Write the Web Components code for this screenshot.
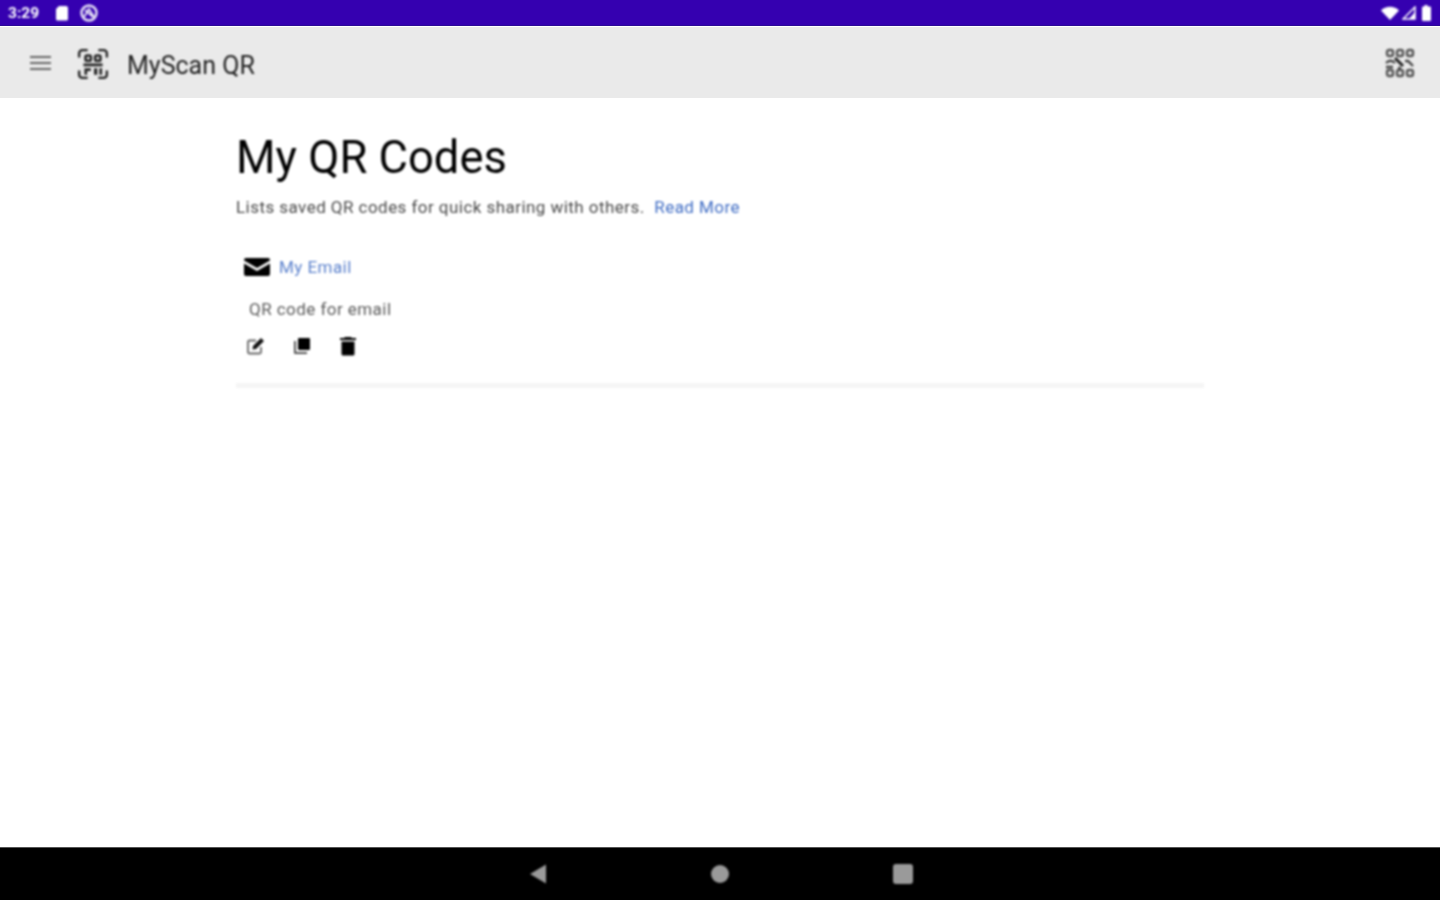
<!DOCTYPE html>
<html>
<head>
<meta charset="utf-8">
<title>MyScan QR</title>
<style>
  html, body { margin: 0; height: 100%; background: #fff; }
  body { font-family: Roboto, "Liberation Sans", sans-serif; }
</style>
</head>
<body>
<app-shell>
  <status-bar slot="status"></status-bar>
  <app-toolbar slot="toolbar" title="MyScan QR"></app-toolbar>
  <page-header title="My QR Codes" text="Lists saved QR codes for quick sharing with others." link="Read More"></page-header>
  <qr-item name="My Email" text="QR code for email"></qr-item>
  <nav-bar slot="nav"></nav-bar>
</app-shell>

<script>
// the reference is a soft upscaled capture, bars keep sharp edges and only their contents get this
const SOFT = "filter: blur(0.8px);";

const QR_ICON = `
  <path d="M2 9V5a3 3 0 0 1 3-3h5M20 2h5a3 3 0 0 1 3 3v4M28 21v4a3 3 0 0 1-3 3h-5M10 28H5a3 3 0 0 1-3-3v-4" fill="none" stroke="currentColor" stroke-width="2.200"/>
  <rect x="8" y="7" width="5" height="5" rx="1.500" fill="none" stroke="currentColor" stroke-width="2"/>
  <rect x="17" y="7" width="5" height="5" rx="1.500" fill="none" stroke="currentColor" stroke-width="2"/>
  <path d="M6 14.500h18v2.500H6zM7 19h6v2.500H9.500V25H7zM16 19h3v6h-3zM21 19h2.500v6H21z" fill="currentColor"/>`;

class AppShell extends HTMLElement {
  constructor() {
    super();
    this.attachShadow({ mode: "open" });
  }

  connectedCallback() {
    this.shadowRoot.innerHTML = `
      <style>
        :host { display: flex; flex-direction: column; height: 900px; }
        main { flex: 1; min-height: 0; ${SOFT} }
        .container { width: 968px; margin: 0 auto; }
      </style>
      <slot name="status"></slot>
      <slot name="toolbar"></slot>
      <main><div class="container"><slot></slot></div></main>
      <slot name="nav"></slot>
    `;
  }
}

class StatusBar extends HTMLElement {
  constructor() {
    super();
    this.attachShadow({ mode: "open" });
  }

  connectedCallback() {
    this.shadowRoot.innerHTML = `
      <style>
        :host {
          display: flex;
          align-items: center;
          height: 26px;
          padding: 0 8px;
          box-sizing: border-box;
          background: #3500b0;
          color: #fff;
          font: 700 15.500px/26px Roboto, sans-serif;
          border-bottom: 1px solid #2c0a96;
        }
        .time { width: 37px; padding-top: 1px; }
        svg { display: block; }
        .left { display: flex; align-items: center; gap: 10px; ${SOFT} }
        .right { margin-left: auto; display: flex; align-items: center; gap: 3px; ${SOFT} }
      </style>
      <div class="left">
        <span class="time">3:29</span>
        <svg width="16" height="16" viewBox="0 0 16 16" style="margin-left:-1px"><path d="M5 1h7a2 2 0 0 1 2 2v11a1.500 1.500 0 0 1-1.500 1.500h-9A1.500 1.500 0 0 1 2 14V4z" fill="#fff"/></svg>
        <svg width="20" height="20" viewBox="0 0 20 20" style="margin-left:-1px"><circle cx="10" cy="10" r="7.500" fill="none" stroke="#e8e4f6" stroke-width="2.500"/><path d="M5 14L10 6l5 8M6 7l8 7" fill="none" stroke="#e8e4f6" stroke-width="1.800"/></svg>
      </div>
      <div class="right">
        <svg width="18" height="14" viewBox="0 0 18 14"><path d="M0 4.500C4.500-.5 13.500-.5 18 4.500L9 14z" fill="#fff"/></svg>
        <svg width="14" height="14" viewBox="0 0 14 14"><path d="M13 1v12H1z" fill="none" stroke="#fff" stroke-width="1.500"/><path d="M13 6v7H7z" fill="#fff"/></svg>
        <svg width="11" height="16" viewBox="0 0 11 16" style="margin-left:2px"><path d="M3.500 0h3v1.500H9a1 1 0 0 1 1 1V15a1 1 0 0 1-1 1H2a1 1 0 0 1-1-1V2.500a1 1 0 0 1 1-1h1.500z" fill="#fff"/></svg>
      </div>
    `;
  }
}

class AppToolbar extends HTMLElement {
  constructor() {
    super();
    this.attachShadow({ mode: "open" });
  }

  connectedCallback() {
    this.shadowRoot.innerHTML = `
      <style>
        :host {
          display: flex;
          align-items: center;
          height: 71px;
          margin-top: 1px;
          padding: 0 25px 0 30px;
          background: #eaeaea;
          color: #222;
        }
        svg { display: block; ${SOFT} }
        .menu { margin-right: 25px; color: #666; }
        .logo { margin-right: 18px; margin-top: 2px; }
        h1 { margin: 0; padding-top: 5px; font: 400 25px/1 Roboto, sans-serif; flex: 1; ${SOFT} }
        rect { fill: none; stroke: currentColor; stroke-width: 2.400; }
      </style>
      <svg class="menu" width="22" height="18" viewBox="0 0 22 18"><path d="M0 2h21v2H0zM0 8h21v2H0zM0 14h21v2H0z" fill="currentColor"/></svg>
      <svg class="logo" width="32" height="32" viewBox="0 0 30 30">${QR_ICON}</svg>
      <h1>${this.getAttribute("title")}</h1>
      <svg width="30" height="30" viewBox="0 0 30 30" style="color:#555">
        <rect x="2" y="2" width="6" height="6" rx="2"/>
        <rect x="12" y="2" width="6" height="6" rx="2"/>
        <rect x="22" y="2" width="6" height="6" rx="2"/>
        <rect x="2" y="22" width="6" height="6" rx="2"/>
        <rect x="12" y="22" width="6" height="6" rx="2"/>
        <rect x="22" y="22" width="6" height="6" rx="2"/>
        <path d="M10 10l8 8" stroke="#222" stroke-width="3" fill="none"/>
        <path d="M1 15c3-3 6-3 9 0M20 13h3l5 5M1 19h7M13 20h3" stroke="#444" stroke-width="2.400" fill="none"/>
      </svg>
    `;
  }
}

class PageHeader extends HTMLElement {
  constructor() {
    super();
    this.attachShadow({ mode: "open" });
  }

  connectedCallback() {
    this.shadowRoot.innerHTML = `
      <style>
        :host { display: block; padding-top: 32px; }
        h2 { margin: 0; font: 400 45.300px/56px Roboto, sans-serif; color: #000; }
        p { margin: 9px 0 0; font: 400 17px/24px Roboto, sans-serif; letter-spacing: 0.45px; color: #4a4a4a; }
        a { color: #3f6cc4; text-decoration: none; margin-left: 5px; }
      </style>
      <h2>${this.getAttribute("title")}</h2>
      <p>${this.getAttribute("text")} <a href="#">${this.getAttribute("link")}</a></p>
    `;
  }
}

class QrItem extends HTMLElement {
  constructor() {
    super();
    this.attachShadow({ mode: "open" });
  }

  connectedCallback() {
    this.shadowRoot.innerHTML = `
      <style>
        :host {
          display: block;
          margin-top: 36px;
          height: 133px;
          box-sizing: border-box;
          border-bottom: 5px solid #f5f5f5;
          font: 400 17px/24px Roboto, sans-serif;
          letter-spacing: 0.45px;
        }
        svg { display: block; }
        .name { display: flex; align-items: center; gap: 9px; padding-left: 8px; }
        .name a { color: #5a80cc; text-decoration: none; }
        .desc { margin: 18px 0 0 13px; color: #5a5a5a; }
        .actions { display: flex; gap: 26px; margin: 15px 0 0 10px; }
      </style>
      <div class="name">
        <svg width="26" height="20" viewBox="0 0 26 20"><path d="M2 1h22a2 2 0 0 1 2 2v.500L13 11 0 3.500V3a2 2 0 0 1 2-2zM0 6.500l13 7.500 13-7.500V17a2 2 0 0 1-2 2H2a2 2 0 0 1-2-2z" fill="#000"/></svg>
        <a href="#">${this.getAttribute("name")}</a>
      </div>
      <p class="desc">${this.getAttribute("text")}</p>
      <div class="actions">
        <svg width="20" height="20" viewBox="0 0 20 20"><path d="M15 11v5a1.500 1.500 0 0 1-1.500 1.500h-10A1.500 1.500 0 0 1 2 16V6a1.500 1.500 0 0 1 1.500-1.500H10" fill="none" stroke="#666" stroke-width="1.800"/><path d="M7 10L15 2l3 3-8 8-3.500.500z" fill="#111"/></svg>
        <svg width="20" height="20" viewBox="0 0 20 20"><path d="M7 2h10a1 1 0 0 1 1 1v10a1 1 0 0 1-1 1H7a1 1 0 0 1-1-1V3a1 1 0 0 1 1-1z" fill="#000"/><path d="M4 5v11h11v2H3a1 1 0 0 1-1-1V5z" fill="#555"/></svg>
        <svg width="20" height="20" viewBox="0 0 20 20"><path d="M7 1h6l1 1h4v2H2V2h4zM3.500 5.500h13V18a1.500 1.500 0 0 1-1.500 1.500H5A1.500 1.500 0 0 1 3.500 18z" fill="#000"/></svg>
      </div>
    `;
  }
}

class NavBar extends HTMLElement {
  constructor() {
    super();
    this.attachShadow({ mode: "open" });
  }

  connectedCallback() {
    this.shadowRoot.innerHTML = `
      <style>
        :host {
          display: flex;
          align-items: center;
          justify-content: center;
          gap: 164px;
          height: 53px;
          background: #000;
          border-top: 1px solid #555;
          box-sizing: border-box;
          padding-left: 2px;
        }
        svg { display: block; ${SOFT} }
      </style>
      <svg width="18" height="20" viewBox="0 0 18 20"><path d="M17 0.500V19.500L1 10z" fill="#9a9a9a"/></svg>
      <svg width="18" height="18" viewBox="0 0 18 18"><circle cx="9" cy="9" r="9" fill="#9a9a9a"/></svg>
      <svg width="20" height="20" viewBox="0 0 20 20"><rect width="20" height="20" rx="3" fill="#9a9a9a"/></svg>
    `;
  }
}

customElements.define("app-shell", AppShell);
customElements.define("status-bar", StatusBar);
customElements.define("app-toolbar", AppToolbar);
customElements.define("page-header", PageHeader);
customElements.define("qr-item", QrItem);
customElements.define("nav-bar", NavBar);
</script>
</body>
</html>
